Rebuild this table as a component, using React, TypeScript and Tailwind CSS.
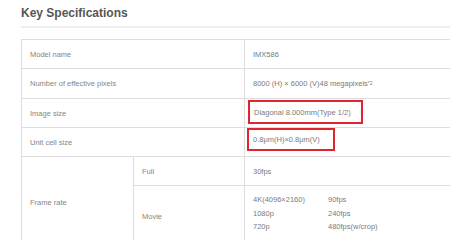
const labelCls = "flex items-center pl-[8px] border-r border-[#dddddd] text-[#858585]";
const valueCls = "flex items-center pl-[8px] text-[#7a7a7a]";

function Row({ label, h, children }: { label: string; h: string; children: React.ReactNode }) {
  return (
    <div className={`flex border-b border-[#dddddd] ${h}`}>
      <div className={`${labelCls} w-[223px]`}>{label}</div>
      {children}
    </div>
  );
}

export default function App() {
  return (
    <div className="w-[450px] h-[240px] overflow-hidden bg-white font-['Liberation_Sans',Arial,sans-serif]">
      <div className="ml-[21px] h-[28px] border-b-2 border-[#eeeeee]">
        <h2 className="pt-[6px] text-[12px] leading-[14px] font-bold text-[#575757]">Key Specifications</h2>
      </div>

      <div className="ml-[21px] mt-[11px] w-[620px] border-l border-t border-[#dddddd] text-[7.5px] leading-[9px]">
        <Row label="Model name" h="h-[29px]">
          <div className={valueCls}>IMX586</div>
        </Row>
        <Row label="Number of effective pixels" h="h-[30px]">
          <div className={valueCls}>
            8000 (H) × 6000 (V)48 megapixels
            <sup className="text-[5px] relative -top-[1px]">*2</sup>
          </div>
        </Row>
        <Row label="Image size" h="h-[29px]">
          <div className="flex items-start pl-[3px] pt-[1px] text-[#7a7a7a]">
            <span className="flex items-center w-[115px] h-[24px] border-2 border-[#e1252f] pl-[4px]">
              Diagonal 8.000mm(Type 1/2)
            </span>
          </div>
        </Row>
        <Row label="Unit cell size" h="h-[29px]">
          <div className="flex items-start pl-[2px] text-[#7a7a7a]">
            <span className="flex items-center w-[88px] h-[23px] border-2 border-[#e1252f] pl-[4px]">
              0.8μm(H)×0.8μm(V)
            </span>
          </div>
        </Row>

        <div className="flex h-[90px]">
          <div className={`${labelCls} w-[112px]`}>Frame rate</div>
          <div className="flex flex-col flex-1">
            <div className="flex h-[29px] border-b border-[#dddddd]">
              <div className={`${labelCls} w-[111px]`}>Full</div>
              <div className={valueCls}>30fps</div>
            </div>
            <div className="flex flex-1 items-start">
              <div className={`${labelCls} w-[111px] self-stretch`}>Movie</div>
              <div className="pl-[8px] pt-[7px] grid grid-cols-[75px_auto] leading-[13.5px] text-[#7a7a7a]">
                <span>4K(4096×2160)</span>
                <span>90fps</span>
                <span>1080p</span>
                <span>240fps</span>
                <span>720p</span>
                <span>480fps(w/crop)</span>
              </div>
            </div>
          </div>
        </div>
      </div>
    </div>
  );
}
